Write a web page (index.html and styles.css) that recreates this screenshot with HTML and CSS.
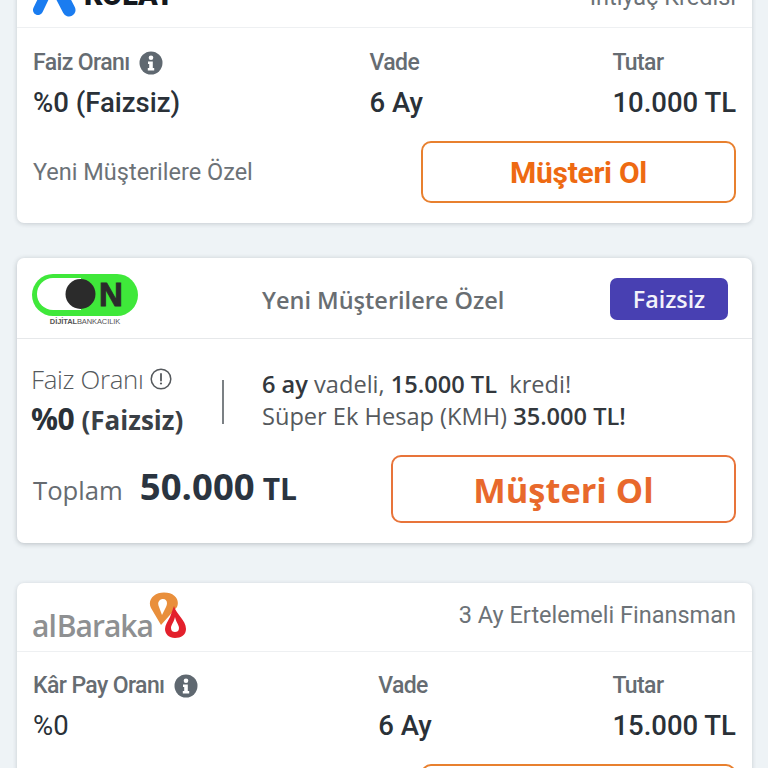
FILE: index.html
```html
<!DOCTYPE html>
<html lang="en">
<head>
    <meta charset="UTF-8">
    <meta name="viewport" content="width=device-width, initial-scale=1.0">
    <title>Krediler</title>
    <link rel="stylesheet" href="styles.css">
</head>
<body>
    <div class="list">
        <div class="card">
            <div class="card-head">
                <div class="kolay">
                    <svg class="kolay-mark" width="44" height="52" viewBox="0 0 44 52">
                        <path d="M5 45 L18 18" stroke="#1a7cf0" stroke-width="10" stroke-linecap="round" fill="none"/>
                        <path d="M36 45 L22 18" stroke="#1a7cf0" stroke-width="13" stroke-linecap="round" fill="none"/>
                    </svg>
                    <span class="kolay-name">KOLAY</span>
                </div>
                <span class="head-note">İhtiyaç Kredisi</span>
            </div>
            <div class="card-body">
                <div class="facts">
                    <div class="fact">
                        <div class="fact-label">Faiz Oranı
                            <svg class="info" width="24" height="24" viewBox="0 0 24 24">
                                <circle cx="12" cy="12" r="11.500" fill="#5f6870"/>
                                <circle cx="12" cy="6.800" r="2.300" fill="#fff"/>
                                <path d="M9 10.500h4.800v6.500h1.400v2.400H8.800V17h1.400v-4.100H9z" fill="#fff"/>
                            </svg>
                        </div>
                        <div class="fact-value">%0 (Faizsiz)</div>
                    </div>
                    <div class="fact">
                        <div class="fact-label">Vade</div>
                        <div class="fact-value">6 Ay</div>
                    </div>
                    <div class="fact">
                        <div class="fact-label">Tutar</div>
                        <div class="fact-value">10.000 TL</div>
                    </div>
                </div>
                <div class="card-foot">
                    <span class="foot-note">Yeni Müşterilere Özel</span>
                    <a class="join">Müşteri Ol</a>
                </div>
            </div>
        </div>

        <div class="card card-promo">
            <div class="promo-head">
                <div class="on-logo">
                    <svg width="108" height="44" viewBox="0 0 108 44">
                        <rect x="1" y="1" width="106" height="42" rx="21" fill="#3fe83a"/>
                        <path d="M22 5 H50 V37 H22 A16 16 0 0 1 22 5 Z" fill="#fff"/>
                        <circle cx="49.500" cy="21" r="15" fill="#2b2b2b"/>
                        <text class="on-n" x="68" y="33">N</text>
                    </svg>
                    <div class="on-sub"><b>DİJİTAL</b>BANKACILIK</div>
                </div>
                <span class="promo-note">Yeni Müşterilere Özel</span>
                <span class="badge">Faizsiz</span>
            </div>
            <div class="promo-body">
                <div class="promo-top">
                    <div class="rate">
                        <div class="rate-label">Faiz Oranı
                            <svg width="22" height="22" viewBox="0 0 22 22">
                                <circle cx="11" cy="11" r="9.800" fill="none" stroke="#55595d" stroke-width="1.500"/>
                                <path d="M11 6v6.500" stroke="#55595d" stroke-width="1.800" stroke-linecap="round"/>
                                <circle cx="11" cy="15.500" r="1.100" fill="#55595d"/>
                            </svg>
                        </div>
                        <div class="rate-value">%0 <span>(Faizsiz)</span></div>
                    </div>
                    <div class="rule"></div>
                    <div class="promo-text">
                        <div><b>6 ay</b> vadeli, <b>15.000 TL</b>&nbsp; kredi!</div>
                        <div>Süper Ek Hesap (KMH) <b>35.000 TL!</b></div>
                    </div>
                </div>
                <div class="promo-foot">
                    <div class="total"><span class="total-label">Toplam</span><span class="total-num">50.000</span><span class="total-unit">TL</span></div>
                    <a class="join join-big">Müşteri Ol</a>
                </div>
            </div>
        </div>

        <div class="card">
            <div class="card-head card-head-tall">
                <div class="baraka">
                    <span class="baraka-name">al<span class="baraka-b">Baraka</span></span>
                    <svg class="baraka-mark" width="38" height="47" viewBox="0 0 38 47">
                        <path fill-rule="evenodd" d="M15 0.500 C26 0.500 31 8 28 15 L12 33 L2 16 C-2 8 5 0.500 15 0.500 Z M14 7 C18 7 19 11 17 15 L13 23 L10 15 C8 11 10 7 14 7 Z" fill="#e98f3c"/>
                        <path fill-rule="evenodd" d="M25 14 C27 22 37 28 37 37 C37 43 32 46 26 46 C20 46 16 42 16 37 C16 33 19 29 21 25 Z M26 25 C27 30 30 33 30 36 C30 39 28 40 26 40 C24 40 22 39 22 36 C22 33 25 30 26 25 Z" fill="#e3202c"/>
                    </svg>
                </div>
                <span class="head-note">3 Ay Ertelemeli Finansman</span>
            </div>
            <div class="card-body card-body-tall">
                <div class="facts">
                    <div class="fact">
                        <div class="fact-label">Kâr Pay Oranı
                            <svg class="info" width="24" height="24" viewBox="0 0 24 24">
                                <circle cx="12" cy="12" r="11.500" fill="#5f6870"/>
                                <circle cx="12" cy="6.800" r="2.300" fill="#fff"/>
                                <path d="M9 10.500h4.800v6.500h1.400v2.400H8.800V17h1.400v-4.100H9z" fill="#fff"/>
                            </svg>
                        </div>
                        <div class="fact-value fact-plain">%0</div>
                    </div>
                    <div class="fact">
                        <div class="fact-label">Vade</div>
                        <div class="fact-value">6 Ay</div>
                    </div>
                    <div class="fact">
                        <div class="fact-label">Tutar</div>
                        <div class="fact-value">15.000 TL</div>
                    </div>
                </div>
                <div class="card-foot">
                    <span class="foot-note"></span>
                    <a class="join join-empty"></a>
                </div>
            </div>
        </div>
    </div>
</body>
</html>
```

FILE: styles.css
```css
html, body {
    height: 768px;
}

body {
    font-family: Roboto, sans-serif;
    margin: 0;
    padding: 0;
    background-color: #eef3f6;
    color: #2a3138;
    overflow: hidden;
}

.list {
    display: flex;
    flex-direction: column;
    gap: 35px;
    margin: -37px 16px 0 17px;
}

.card {
    flex-shrink: 0;
    background-color: #ffffff;
    border-radius: 7px;
    box-shadow: 0 1px 4px rgba(60, 70, 80, 0.22);
}

.card-head {
    height: 64px;
    padding: 0 16px;
    display: flex;
    align-items: flex-end;
    justify-content: space-between;
    border-bottom: 1px solid #eef0f2;
}

.card-head-tall {
    height: 68px;
    align-items: center;
}

.kolay {
    display: flex;
    align-items: flex-end;
    margin-bottom: 10px;
}

.kolay-mark {
    margin-right: 7px;
}

.kolay-name {
    font-size: 29px;
    font-weight: 900;
    line-height: 29px;
    color: #14181d;
    margin-bottom: 7px;
}

.head-note {
    font-size: 23.500px;
    color: #6c7277;
    margin-bottom: 16px;
}

.card-head-tall .head-note {
    margin-bottom: 4px;
}

.card-body {
    padding: 21px 16px 20px;
}

.card-body-tall {
    padding-top: 20px;
}

.facts {
    display: flex;
    justify-content: space-between;
}

.fact-label {
    font-size: 23px;
    font-weight: 500;
    letter-spacing: -0.6px;
    line-height: 28px;
    color: #666c72;
    display: flex;
    align-items: center;
    gap: 9px;
}

.fact-value {
    margin-top: 11px;
    font-size: 27.500px;
    font-weight: 500;
    line-height: 30px;
}

.fact-plain {
    font-weight: 400;
}

.card-foot {
    margin-top: 23px;
    display: flex;
    align-items: center;
    justify-content: space-between;
}

.foot-note {
    font-size: 23.500px;
    color: #6c7277;
}

.join {
    box-sizing: border-box;
    width: 315px;
    height: 62px;
    display: flex;
    align-items: center;
    justify-content: center;
    border: 2px solid #e8802f;
    border-radius: 10px;
    font-size: 30px;
    font-weight: 700;
    letter-spacing: -0.3px;
    color: #ee6a12;
}

/* orta kart Open Sans */
.card-promo {
    font-family: "Open Sans", sans-serif;
    height: 285px;
    margin-bottom: 5px;
    box-shadow: 0 1px 5px rgba(60, 70, 80, 0.3);
}

.promo-head {
    height: 81px;
    box-sizing: border-box;
    padding: 15px 24px 0 14px;
    display: flex;
    align-items: flex-start;
    border-bottom: 1px solid #e6e8ea;
}

.on-logo {
    width: 108px;
    height: 60px;
}

.on-logo svg {
    display: block;
}

.on-n {
    font-family: "Liberation Sans", sans-serif;
    font-size: 33px;
    font-weight: 700;
    fill: #2b2b2b;
    stroke: #2b2b2b;
    stroke-width: 1px;
}

.on-sub {
    font-family: "Liberation Sans", sans-serif;
    font-size: 7.500px;
    letter-spacing: -0.1px;
    color: #555;
    text-align: center;
}

.promo-note {
    margin: 10px 0 0 123px;
    font-size: 23.500px;
    font-weight: 600;
    line-height: 34px;
    color: #696e72;
    flex: 1;
    white-space: nowrap;
}

.badge {
    width: 118px;
    height: 42px;
    margin-top: 5px;
    display: flex;
    align-items: center;
    justify-content: center;
    background-color: #4840b2;
    border-radius: 7px;
    color: #f2f2fa;
    font-size: 23.300px;
    font-weight: 600;
}

.promo-body {
    padding: 24px 16px 0 15px;
}

.promo-top {
    display: flex;
    align-items: flex-start;
}

.rate {
    width: 191px;
    margin-left: -1px;
}

.rate-label {
    display: flex;
    align-items: center;
    gap: 6px;
    font-size: 25.800px;
    font-weight: 300;
    letter-spacing: -0.3px;
    line-height: 32px;
    color: #55595d;
}

.rate-value {
    margin-top: 6px;
    font-size: 30px;
    font-weight: 700;
    line-height: 36px;
    letter-spacing: -0.5px;
}

.rate-value span {
    font-size: 26px;
    letter-spacing: 0;
    color: #3a4046;
}

.rule {
    width: 2px;
    height: 44px;
    margin: 17px 38px 0 0;
    background-color: #7b8084;
}

.promo-text {
    font-size: 23.600px;
    line-height: 32px;
    color: #55595d;
    white-space: nowrap;
    margin-top: 5px;
}

.promo-text b {
    font-weight: 600;
    color: #33383d;
}

.promo-foot {
    margin-top: 17px;
    display: flex;
    align-items: center;
    justify-content: space-between;
}

.total {
    display: flex;
    align-items: baseline;
    padding: 0 0 7px 1px;
}

.total-label {
    font-size: 25.700px;
    color: #666b70;
    margin-right: 17px;
}

.total-num {
    font-size: 36.500px;
    font-weight: 700;
    color: #2a3440;
    margin-right: 8px;
}

.total-unit {
    font-size: 30px;
    font-weight: 700;
    color: #2a3440;
}

.join-big {
    width: 345px;
    height: 68px;
    border-color: #e8743a;
    font-size: 34.400px;
    letter-spacing: 0;
    color: #e8692c;
}

.baraka {
    display: flex;
    align-items: flex-end;
}

.baraka-name {
    font-family: "Open Sans", sans-serif;
    font-size: 30px;
    line-height: 40px;
    font-weight: 600;
    color: #8e9092;
    letter-spacing: -1px;
    margin: 0 0 -4px -1px;
}

.baraka-b {
    margin-left: 1px;
}

.baraka-mark {
    margin-left: -4px;
    margin-bottom: 3px;
}
```
